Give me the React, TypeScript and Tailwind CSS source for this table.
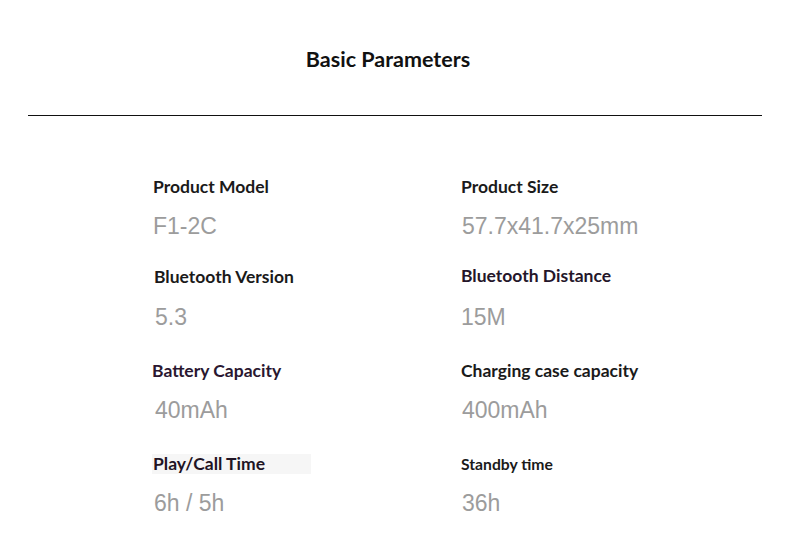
const rows = [
  {
    mt: "mt-[61px]",
    left: { label: "Product Model", value: "F1-2C", cls: "text-[#1a1a1a] text-[17.5px]", vcls: "" },
    right: { label: "Product Size", value: "57.7x41.7x25mm", cls: "text-[#1a1a1a] text-[17.5px]", vcls: "ml-px" },
  },
  {
    mt: "mt-[27px]",
    left: { label: "Bluetooth Version", value: "5.3", cls: "text-[#1a1a1a] text-[17.5px] ml-px", vcls: "ml-[2px] mt-[16px]" },
    right: { label: "Bluetooth Distance", value: "15M", cls: "text-[#24162a] text-[17.5px] -mt-px", vcls: "mt-[17px]" },
  },
  {
    mt: "mt-[30px]",
    left: { label: "Battery Capacity", value: "40mAh", cls: "text-[#2a1730] text-[17.5px] -ml-px", vcls: "ml-[2px]" },
    right: { label: "Charging case capacity", value: "400mAh", cls: "text-[#1a1a1a] text-[17.5px]", vcls: "ml-px" },
  },
  {
    mt: "mt-[30px]",
    left: { label: "Play/Call Time", value: "6h / 5h", cls: "text-[#1f1424] text-[17.5px]", vcls: "ml-px", boxed: true },
    right: { label: "Standby time", value: "36h", cls: "text-[#1a1a1a] text-[15.7px]", vcls: "ml-px" },
  },
]

type Item = { label: string; value: string; cls: string; vcls: string; boxed?: boolean }

function Param({ item }: { item: Item }) {
  return (
    <div className="flex flex-col">
      <div
        className={`h-5 leading-5 font-bold ${item.cls} ${
          item.boxed ? "bg-[#f6f6f6] w-[159px] -ml-px pl-px" : ""
        }`}
        style={{ fontFamily: "Lato, sans-serif" }}
      >
        {item.label}
      </div>
      <div
        className={`mt-[15px] h-7 leading-7 text-[23px] text-[#9c9c9c] ${item.vcls}`}
        style={{ fontFamily: "'Liberation Sans', Arial, sans-serif" }}
      >
        {item.value}
      </div>
    </div>
  )
}

export default function App() {
  return (
    <div className="w-[790px] h-[556px] bg-white overflow-hidden">
      {/* Title */}
      <div className="pt-[47px] flex justify-center">
        <h1
          className="h-6 leading-6 text-[21.5px] font-bold text-[#111] pr-[14px]"
          style={{ fontFamily: "Lato, sans-serif" }}
        >
          Basic Parameters
        </h1>
      </div>
      <div className="mt-[44px] mx-[28px] h-px bg-[#111]" />

      {/* Parameter grid */}
      <div className="pl-[153px]">
        {rows.map((r, i) => (
          <div key={i} className={`${r.mt} grid grid-cols-[308px_1fr]`}>
            <Param item={r.left} />
            <Param item={r.right} />
          </div>
        ))}
      </div>
    </div>
  )
}
